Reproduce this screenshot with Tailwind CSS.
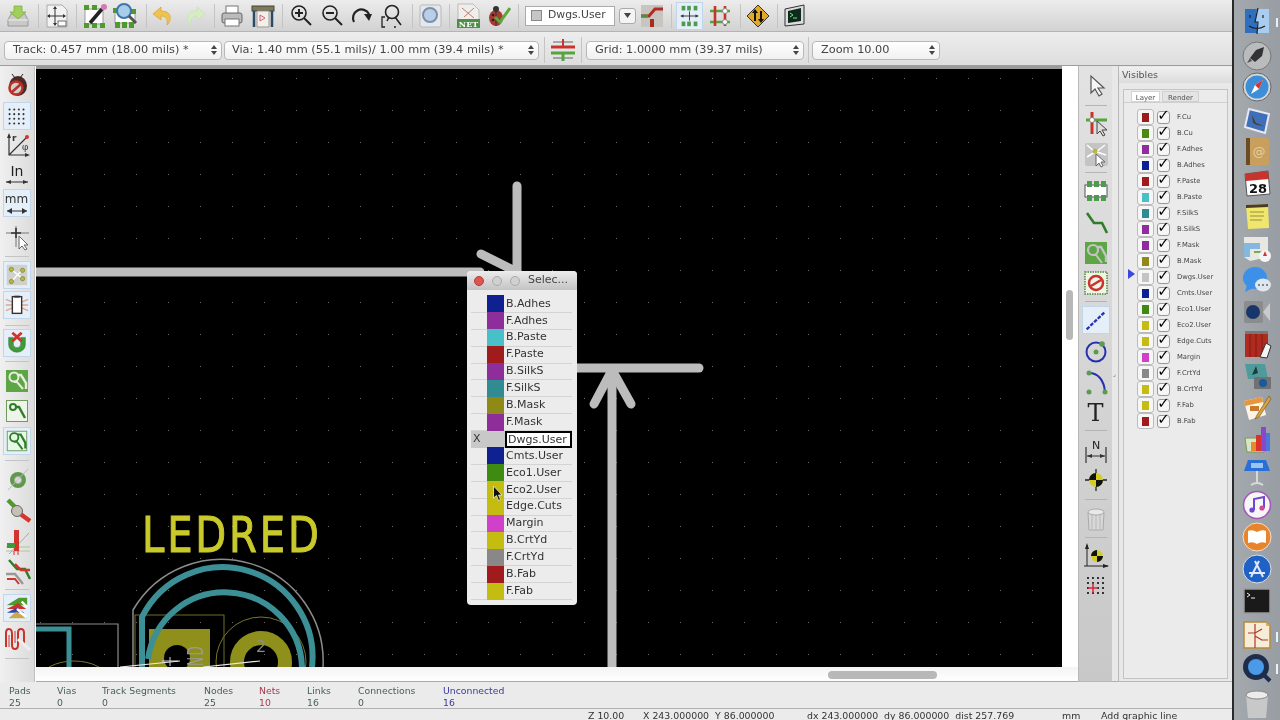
<!DOCTYPE html>
<html><head><meta charset="utf-8"><title>Pcbnew</title>
<script src="https://cdn.jsdelivr.net/npm/@tailwindcss/browser@4"></script>
</head>
<body class="overflow-hidden">
<div class="relative flex w-[1280px] h-[720px] overflow-hidden font-['DejaVu_Sans',sans-serif] text-[#333] bg-[#e8e8e8] blur-[0.4px]">
<div class="flex flex-col w-[1232px] h-[720px] shrink-0">

<!-- top toolbar -->
<div class="flex items-center h-[32px] pl-[5px] bg-gradient-to-b from-[#ececec] to-[#d2d2d2] border-b border-[#b4b4b4] shrink-0">
<svg class="w-[26px] h-[26px] shrink-0" viewBox="0 0 26 26"><path d="M3 17 L6 11 H20 L23 17 V23 H3Z" fill="#c9c9c9" stroke="#999"/><path d="M3 17H23" stroke="#eee"/><path d="M9 3H17V9H21L13 16L5 9H9Z" fill="#9fd05a" stroke="#7aa93c" stroke-width=".7"/></svg>
<i class="ml-[7px] w-px h-[24px] bg-[#c4c4c4] shrink-0"></i>
<svg class="ml-[5px] w-[26px] h-[26px] shrink-0" viewBox="0 0 26 26"><path d="M3 2H18L23 7V24H3Z" fill="#f2f2f2" stroke="#aaa"/><path d="M11 5V21M4 13H21" stroke="#333" stroke-width="1"/><path d="M11 3L9 6H13ZM11 23L9 20H13ZM3 13L6 11V15ZM22 13L19 11V15Z" fill="#333"/><rect x="14" y="18" width="8" height="5" fill="#fff" stroke="#333" stroke-width=".7"/></svg>
<i class="ml-[6px] w-px h-[24px] bg-[#c4c4c4] shrink-0"></i>
<svg class="ml-[5px] w-[26px] h-[26px] shrink-0" viewBox="0 0 26 26"><rect x="3" y="6" width="18" height="15" fill="#fff" stroke="#999"/><g fill="#4f9a2c"><rect x="2" y="2" width="5" height="5"/><rect x="2" y="20" width="5" height="5"/><rect x="10" y="20" width="5" height="5"/><rect x="18" y="20" width="5" height="5"/><rect x="10" y="2" width="5" height="5"/></g><path d="M8 20L20 6" stroke="#222" stroke-width="3.5"/><circle cx="22" cy="4" r="3" fill="#d878b0"/></svg>
<svg class="ml-[4px] w-[26px] h-[26px] shrink-0" viewBox="0 0 26 26"><rect x="3" y="8" width="20" height="12" fill="#fff" stroke="#999"/><g fill="#4f9a2c"><rect x="3" y="19" width="5" height="6"/><rect x="10" y="19" width="5" height="6"/><rect x="17" y="19" width="5" height="6"/><rect x="19" y="6" width="5" height="5"/><rect x="1" y="5" width="5" height="5"/></g><circle cx="12" cy="8" r="7" fill="#a8cdea" stroke="#3f76a8" stroke-width="2"/><path d="M17 13L24 20" stroke="#555" stroke-width="3"/></svg>
<i class="ml-[8px] w-px h-[24px] bg-[#c4c4c4] shrink-0"></i>
<svg class="ml-[3px] w-[26px] h-[26px] shrink-0" viewBox="0 0 26 26"><path d="M11 4L3 11L11 17V13C16 13 18 16 17 22C22 17 22 8 11 8Z" fill="#eec34e" stroke="#d7a22c" stroke-width=".7"/></svg>
<svg class="ml-[6px] w-[26px] h-[26px] shrink-0" viewBox="0 0 26 26"><path d="M15 4L23 11L15 17V13C10 13 8 16 9 22C4 17 4 8 15 8Z" fill="#d6edc4" stroke="#c5e2ad" stroke-width=".7"/></svg>
<i class="ml-[6px] w-px h-[24px] bg-[#c4c4c4] shrink-0"></i>
<svg class="ml-[4px] w-[26px] h-[26px] shrink-0" viewBox="0 0 26 26"><rect x="7" y="3" width="12" height="8" fill="#fff" stroke="#777"/><rect x="3" y="10" width="20" height="10" rx="2" fill="#bbb" stroke="#666"/><rect x="6" y="16" width="14" height="7" fill="#fff" stroke="#777"/></svg>
<svg class="ml-[5px] w-[26px] h-[26px] shrink-0" viewBox="0 0 26 26"><rect x="2" y="3" width="22" height="5" fill="#7d7a55" stroke="#444"/><path d="M4 8V24M22 8V24" stroke="#2b4a66" stroke-width="2.5"/><path d="M7 8H19V24H7Z" fill="#f3f0e8" stroke="#999"/><path d="M10 12L15 15L10 18Z" fill="none" stroke="#d06080"/></svg>
<i class="ml-[6px] w-px h-[24px] bg-[#c4c4c4] shrink-0"></i>
<svg class="ml-[5px] w-[26px] h-[26px] shrink-0" viewBox="0 0 26 26"><circle cx="11" cy="10" r="7" fill="none" stroke="#222" stroke-width="1.6"/><path d="M16 15L23 22" stroke="#222" stroke-width="2"/><path d="M7 10H15M11 6V14" stroke="#222" stroke-width="2"/></svg>
<svg class="ml-[5px] w-[26px] h-[26px] shrink-0" viewBox="0 0 26 26"><circle cx="11" cy="10" r="7" fill="none" stroke="#222" stroke-width="1.6"/><path d="M16 15L23 22" stroke="#222" stroke-width="2"/><path d="M7 10H15" stroke="#222" stroke-width="2"/></svg>
<svg class="ml-[4px] w-[26px] h-[26px] shrink-0" viewBox="0 0 26 26"><path d="M5 19A8 8 0 0 1 20 11" fill="none" stroke="#222" stroke-width="2.2"/><path d="M15 11H23L20 18Z" fill="#222"/></svg>
<svg class="ml-[3px] w-[26px] h-[26px] shrink-0" viewBox="0 0 26 26"><circle cx="14" cy="9" r="6.5" fill="none" stroke="#222" stroke-width="1.6"/><path d="M17 14L23 22M11 14L9 18" stroke="#222" stroke-width="1.6"/><path d="M7 14H4V24H7M18 24H16" fill="none" stroke="#222" stroke-width="1.3"/></svg>
<i class="ml-[8px] w-px h-[24px] bg-[#c4c4c4] shrink-0"></i>
<svg class="ml-[4px] w-[26px] h-[26px] shrink-0" viewBox="0 0 26 26"><rect x="3" y="2" width="21" height="22" rx="2" fill="#e4e8ee" stroke="#b8b8b8"/><circle cx="13" cy="12" r="7" fill="#b9cfe8" stroke="#7c8fa8" stroke-width="2"/></svg>
<i class="ml-[6px] w-px h-[24px] bg-[#c4c4c4] shrink-0"></i>
<svg class="ml-[5px] w-[26px] h-[26px] shrink-0" viewBox="0 0 26 26"><path d="M3 1H18L24 7V17H3Z" fill="#eee" stroke="#bbb"/><path d="M7 5L19 15M19 5L9 14" stroke="#c87a60" stroke-width="1"/><rect x="2" y="16" width="23" height="9" fill="#4f8f45"/><text x="13.5" y="24" text-anchor="middle" font-size="8" font-weight="700" fill="#fff" font-family="DejaVu Serif">NET</text></svg>
<svg class="ml-[4px] w-[26px] h-[26px] shrink-0" viewBox="0 0 26 26"><ellipse cx="11" cy="15" rx="7" ry="8" fill="#a83a30"/><path d="M11 7V23" stroke="#333"/><circle cx="8" cy="12" r="1.3" fill="#222"/><circle cx="8" cy="17" r="1.3" fill="#222"/><circle cx="14" cy="17" r="1.3" fill="#222"/><circle cx="11" cy="6" r="3" fill="#333"/><path d="M10 14L15 19L25 5" fill="none" stroke="#5ba83c" stroke-width="3"/></svg>
<i class="ml-[7px] w-px h-[24px] bg-[#c4c4c4] shrink-0"></i>
<div class="ml-[6px] w-[90px] h-[20px] flex items-center bg-white border border-[#aaa] shrink-0"><i class="ml-[5px] w-[11px] h-[11px] bg-[#c6c6c6] border border-[#888]"></i><span class="ml-[6px] text-[10.8px] text-[#444]">Dwgs.User</span></div>
<div class="ml-[4px] w-[17px] h-[16px] flex items-center justify-center bg-[#f4f4f4] border border-[#aaa] rounded-[3px] shrink-0"><svg class="w-[7px] h-[5px]" viewBox="0 0 7 5"><path d="M0 0H7L3.5 5Z" fill="#444"/></svg></div>
<svg class="ml-[3px] w-[26px] h-[26px] shrink-0" viewBox="0 0 26 26"><rect x="2" y="2" width="22" height="22" fill="#c8c4c0"/><path d="M2 13H10L16 6H24" fill="none" stroke="#b32c22" stroke-width="3"/><path d="M13 24V16" stroke="#a82a20" stroke-width="4"/><path d="M2 13H9" stroke="#4f8f45" stroke-width="3"/></svg>
<i class="ml-[6px] w-px h-[24px] bg-[#c4c4c4] shrink-0"></i>
<svg class="ml-[4px] w-[27px] h-[28px] shrink-0 bg-[#e4eff9] border border-[#c2d6ea]" viewBox="0 0 27 28"><g fill="#4f9a50"><rect x="5" y="3" width="4" height="5"/><rect x="11" y="3" width="4" height="5"/><rect x="18" y="3" width="4" height="5"/><rect x="5" y="20" width="4" height="5"/><rect x="11" y="20" width="4" height="5"/><rect x="18" y="20" width="4" height="5"/></g><path d="M4 14H23M13.5 9V19" stroke="#333"/><path d="M4 14L7 12V16ZM23 14L20 12V16Z" fill="#333"/></svg>
<svg class="ml-[4px] w-[26px] h-[26px] shrink-0" viewBox="0 0 26 26"><path d="M3 8H23M3 19H23" stroke="#55a53c" stroke-width="2.6"/><path d="M8 3V23M18 3V23" stroke="#c8342c" stroke-width="2.6"/><circle cx="18" cy="8" r="2.5" fill="#fff" stroke="#888"/><circle cx="18" cy="19" r="2.5" fill="#fff" stroke="#888"/></svg>
<i class="ml-[7px] w-px h-[24px] bg-[#c4c4c4] shrink-0"></i>
<svg class="ml-[4px] w-[26px] h-[26px] shrink-0" viewBox="0 0 26 26"><path d="M13 2L24 13L13 24L2 13Z" fill="#e0a92c" stroke="#333"/><path d="M10 18V8M16 8V18" stroke="#111" stroke-width="2"/><path d="M7 10L10 6L13 10ZM13 16L16 20L19 16Z" fill="#111"/></svg>
<i class="ml-[6px] w-px h-[24px] bg-[#c4c4c4] shrink-0"></i>
<svg class="ml-[4px] w-[26px] h-[26px] shrink-0" viewBox="0 0 26 26"><path d="M3 6L22 2V21L3 23Z" fill="#ddd" stroke="#333"/><path d="M6 8L19 5V18L6 20Z" fill="#0e2a1c"/><path d="M8 10L11 12L8 14M11 15H15" stroke="#7fe07f" fill="none"/></svg>
</div>

<!-- second toolbar -->
<div class="flex items-center h-[34px] pt-[3px] pl-[4px] bg-gradient-to-b from-[#ededed] to-[#dedede] border-b border-[#9e9e9e] text-[#444] shrink-0">
<div class="w-[218px] h-[19px] flex items-center justify-between pl-[8px] pr-[4px] bg-gradient-to-b from-white to-[#f0f0f0] border border-[#b8b8b8] rounded-[4px] text-[11.3px] shrink-0"><span>Track: 0.457 mm (18.00 mils) *</span><svg class="w-[6px] h-[10px]" viewBox="0 0 6 10"><path d="M0 4L3 0L6 4ZM0 6L3 10L6 6Z" fill="#444"/></svg></div>
<div class="ml-[2px] w-[315px] h-[19px] flex items-center justify-between pl-[7px] pr-[4px] bg-gradient-to-b from-white to-[#f0f0f0] border border-[#b8b8b8] rounded-[4px] text-[11.3px] shrink-0"><span>Via: 1.40 mm (55.1 mils)/ 1.00 mm (39.4 mils) *</span><svg class="w-[6px] h-[10px]" viewBox="0 0 6 10"><path d="M0 4L3 0L6 4ZM0 6L3 10L6 6Z" fill="#444"/></svg></div>
<i class="ml-[5px] w-px h-[26px] bg-[#c4c4c4] shrink-0"></i>
<svg class="ml-[5px] w-[26px] h-[26px] shrink-0" viewBox="0 0 26 26"><path d="M3 5H23M3 21H23" stroke="#444" stroke-width=".8"/><path d="M1 10H25" stroke="#c8342c" stroke-width="3"/><path d="M1 16H25" stroke="#55a53c" stroke-width="3"/><path d="M13 2V9" stroke="#c8342c" stroke-width="2"/><path d="M13 17V24" stroke="#55a53c" stroke-width="3"/></svg>
<i class="ml-[5px] w-px h-[26px] bg-[#c4c4c4] shrink-0"></i>
<div class="ml-[4px] w-[218px] h-[19px] flex items-center justify-between pl-[8px] pr-[4px] bg-gradient-to-b from-white to-[#f0f0f0] border border-[#b8b8b8] rounded-[4px] text-[11.3px] shrink-0"><span>Grid: 1.0000 mm (39.37 mils)</span><svg class="w-[6px] h-[10px]" viewBox="0 0 6 10"><path d="M0 4L3 0L6 4ZM0 6L3 10L6 6Z" fill="#444"/></svg></div>
<i class="ml-[4px] w-px h-[26px] bg-[#c4c4c4] shrink-0"></i>
<div class="ml-[3px] w-[128px] h-[19px] flex items-center justify-between pl-[8px] pr-[4px] bg-gradient-to-b from-white to-[#f0f0f0] border border-[#b8b8b8] rounded-[4px] text-[11.3px] shrink-0"><span>Zoom 10.00</span><svg class="w-[6px] h-[10px]" viewBox="0 0 6 10"><path d="M0 4L3 0L6 4ZM0 6L3 10L6 6Z" fill="#444"/></svg></div>
</div>

<!-- body -->
<div class="flex h-[616px] shrink-0">

<!-- left toolbar -->
<div class="flex flex-col items-center w-[35px] h-[616px] pt-[1px] pr-[1px] bg-gradient-to-r from-[#f0f0f0] to-[#dcdcdc] border-r border-[#c0c0c0] shrink-0">
<svg class="mt-[4px] w-[28px] h-[28px] shrink-0" viewBox="0 0 28 28"><ellipse cx="15" cy="15" rx="9" ry="10" fill="#4a2a28"/><path d="M9 3L12 7M20 3L17 7" stroke="#222"/><circle cx="13" cy="17" r="6.500" fill="#cfd0cc" stroke="#b83028" stroke-width="2.500"/><path d="M9 21L18 13" stroke="#b83028" stroke-width="2.500"/></svg>
<svg class="mt-[3px] w-[28px] h-[28px] shrink-0 bg-[#e4eff9] border border-[#c2d6ea]" viewBox="0 0 28 28"><g fill="#333"><circle cx="6" cy="7" r="1.1"/><circle cx="11" cy="7" r="1.1"/><circle cx="16" cy="7" r="1.1"/><circle cx="21" cy="7" r="1.1"/><circle cx="6" cy="12" r="1.1"/><circle cx="11" cy="12" r="1.1"/><circle cx="16" cy="12" r="1.1"/><circle cx="21" cy="12" r="1.1"/><circle cx="6" cy="17" r="1.1"/><circle cx="11" cy="17" r="1.1"/><circle cx="16" cy="17" r="1.1"/><circle cx="21" cy="17" r="1.1"/><circle cx="6" cy="22" r="1.1"/><circle cx="11" cy="22" r="1.1"/><circle cx="16" cy="22" r="1.1"/><circle cx="21" cy="22" r="1.1"/></g></svg>
<svg class="mt-[1px] w-[28px] h-[28px] shrink-0" viewBox="0 0 28 28"><path d="M6 4V24H25M6 24L24 6" fill="none" stroke="#333" stroke-width="1.2"/><path d="M6 2L4 7H8ZM27 24L22 22V26Z" fill="#333"/><circle cx="24" cy="6" r="2" fill="#d0342c"/><text x="9" y="10" font-size="9" font-weight="700" fill="#333" font-family="DejaVu Sans">r</text><text x="19" y="19" font-size="9" fill="#333" font-family="DejaVu Serif">φ</text></svg>
<svg class="w-[28px] h-[28px] shrink-0" viewBox="0 0 28 28"><text x="14" y="17" text-anchor="middle" font-size="14" fill="#222" font-family="DejaVu Sans">In</text><path d="M3 23H25" stroke="#333"/><path d="M3 23L8 21V25ZM25 23L20 21V25Z" fill="#333"/></svg>
<div class="mt-[2px] w-[28px] h-[28px] flex flex-col items-center bg-[#e4eff9] border border-[#c2d6ea] shrink-0"><span class="text-[12px] leading-[18px]">mm</span><svg class="w-[24px] h-[6px]" viewBox="0 0 24 6"><path d="M2 3H22" stroke="#333"/><path d="M2 3L7 0V6ZM22 3L17 0V6Z" fill="#333"/></svg></div>
<svg class="mt-[6px] w-[28px] h-[28px] shrink-0" viewBox="0 0 28 28"><path d="M3 10H26M13 3V24" stroke="#777" stroke-width="1"/><path d="M8 10H18M13 5V15" stroke="#333" stroke-width="1.6"/><path d="M16 13V26L19 23L22 27L24 26L21 22H25Z" fill="#fff" stroke="#666"/></svg>
<i class="mt-[5px] w-[24px] h-px bg-[#c4c4c4] shrink-0"></i>
<svg class="mt-[4px] w-[28px] h-[28px] shrink-0 bg-[#e4eff9] border border-[#c2d6ea]" viewBox="0 0 28 28"><rect x="3" y="3" width="22" height="22" fill="#d0d0cc"/><path d="M8 8L20 18M19 9L8 21" stroke="#fff" stroke-width="1.5"/><g fill="#b4ba3c" stroke="#6c6c20" stroke-width=".6"><circle cx="8" cy="8" r="2.3"/><circle cx="20" cy="9" r="2.3"/><circle cx="20" cy="18" r="2.3"/><circle cx="8" cy="21" r="2.3"/></g></svg>
<svg class="mt-[2px] w-[28px] h-[28px] shrink-0 bg-[#e4eff9] border border-[#c2d6ea]" viewBox="0 0 28 28"><path d="M2 8L9 11M2 14H9M2 20L9 17M26 8L19 11M26 14H19M26 20L19 17" stroke="#e2a58c" stroke-width="1.5"/><rect x="9" y="5" width="10" height="18" fill="#fff" stroke="#333" stroke-width="1.5"/><rect x="11" y="4" width="6" height="2" fill="#333"/></svg>
<i class="mt-[6px] w-[24px] h-px bg-[#c4c4c4] shrink-0"></i>
<svg class="mt-[3px] w-[28px] h-[28px] shrink-0 bg-[#e4eff9] border border-[#c2d6ea]" viewBox="0 0 28 28"><path d="M5 8V16A9 8 0 0 0 23 16V8H18V15A4 4 0 0 1 10 15V8Z" fill="#3f9a3a" stroke="#2b6f2a" stroke-width=".5"/><path d="M9 3L19 12M19 3L9 12" stroke="#d0342c" stroke-width="3"/></svg>
<i class="mt-[4px] w-[24px] h-px bg-[#c4c4c4] shrink-0"></i>
<svg class="mt-[5px] w-[28px] h-[28px] shrink-0" viewBox="0 0 28 28"><rect x="3" y="3" width="22" height="22" fill="#5da545"/><circle cx="11" cy="10" r="4.5" fill="none" stroke="#e5efdc" stroke-width="2"/><path d="M14 8H18L23 16V22" fill="none" stroke="#e5efdc" stroke-width="2.4"/><path d="M11 15H14L20 22" fill="none" stroke="#e5efdc" stroke-width="2"/></svg>
<svg class="mt-[2px] w-[28px] h-[28px] shrink-0" viewBox="0 0 28 28"><rect x="3.5" y="3.5" width="21" height="21" fill="#eef4ea" stroke="#6d9c5c"/><circle cx="10" cy="10" r="3" fill="none" stroke="#2e7d28" stroke-width="2"/><path d="M12 10H16L22 21" fill="none" stroke="#2e7d28" stroke-width="2.4"/></svg>
<svg class="mt-[2px] w-[28px] h-[28px] shrink-0 bg-[#e4eff9] border border-[#c2d6ea]" viewBox="0 0 28 28"><rect x="3.5" y="3.5" width="21" height="21" fill="#e8f8e8" stroke="#6d9c5c"/><circle cx="11" cy="10" r="4.5" fill="none" stroke="#2e7d28" stroke-width="2"/><path d="M14 7H18L23 16V22" fill="none" stroke="#2e7d28" stroke-width="2.4"/><path d="M11 15H14L20 23" fill="none" stroke="#2e7d28" stroke-width="2"/></svg>
<i class="mt-[5px] w-[24px] h-px bg-[#c4c4c4] shrink-0"></i>
<svg class="mt-[5px] w-[28px] h-[28px] shrink-0" viewBox="0 0 28 28"><circle cx="15" cy="14" r="8" fill="#5f9a4b"/><circle cx="15" cy="14" r="3.5" fill="#ddd" stroke="#aaa"/><path d="M5 24L25 3" stroke="#bbb"/></svg>
<svg class="mt-[3px] w-[28px] h-[28px] shrink-0" viewBox="0 0 28 28"><path d="M5 3L14 12" stroke="#4f9a2c" stroke-width="4.5"/><path d="M16 16L27 24" stroke="#d8342c" stroke-width="4.5"/><circle cx="14" cy="14" r="5.5" fill="#c4c0b4" stroke="#666"/></svg>
<svg class="mt-[2px] w-[28px] h-[28px] shrink-0" viewBox="0 0 28 28"><path d="M3 20H27M3 24H27" stroke="#a8c89a"/><path d="M6 27L26 6" stroke="#aaa"/><rect x="11" y="3" width="5" height="21" fill="#d0342c"/><rect x="4" y="16" width="8" height="5" fill="#3f9a3a"/><path d="M11 24V28M15 24V28" stroke="#d0342c"/></svg>
<svg class="mt-[2px] w-[28px] h-[28px] shrink-0" viewBox="0 0 28 28"><path d="M6 3L14 12H22L27 22" fill="none" stroke="#2e7d28" stroke-width="2.4"/><path d="M12 7L18 13H27" fill="none" stroke="#d0342c" stroke-width="2.4"/><path d="M3 17H12L20 27" fill="none" stroke="#999" stroke-width="2.4"/><path d="M4 22H12L16 27" fill="none" stroke="#d0342c" stroke-width="2"/></svg>
<i class="mt-[4px] w-[24px] h-px bg-[#c4c4c4] shrink-0"></i>
<svg class="mt-[4px] w-[28px] h-[28px] shrink-0 bg-[#e4eff9] border border-[#c2d6ea]" viewBox="0 0 28 28"><path d="M3 11L16 3H25V11Z" fill="#4f9a2c"/><path d="M3 15L15 9L24 15Z" fill="#c8342c"/><path d="M3 19L13 14L22 19Z" fill="#3044b0"/><path d="M5 25L13 18L25 25Z" fill="#c9a948"/><path d="M14 15L24 24M19 7L25 13" stroke="#fff" stroke-width="2.6"/></svg>
<svg class="mt-[3px] w-[28px] h-[28px] shrink-0" viewBox="0 0 28 28"><path d="M3 22V8Q3 4 6 4T9 9V20Q9 24 12 24T15 20V8Q15 4 18 4T21 8V20" fill="none" stroke="#c8342c" stroke-width="2"/><path d="M6 22V10M12 6V18" stroke="#c8342c"/><path d="M15 14L27 25" stroke="#eee" stroke-width="3.2"/></svg>
<i class="mt-[5px] w-[24px] h-px bg-[#c4c4c4] shrink-0"></i>
</div>

<!-- canvas column -->
<div class="flex flex-col w-[1043px] h-[616px] pl-[1px] bg-white shrink-0">
<div class="flex h-[601px]">
<svg class="block w-[1026px] h-[601px] bg-black border-t-[3px] border-t-[#9a9a9a] shrink-0" viewBox="36 69 1026 598">
<defs><pattern id="dots" x="8" y="14" width="32" height="32" patternUnits="userSpaceOnUse"><rect x="0" y="0" width="1" height="1" fill="#6a6a6a"/></pattern></defs>
<rect x="36" y="69" width="1026" height="598" fill="url(#dots)"/>
<g fill="none" stroke="#bcbcbc" stroke-width="9" stroke-linecap="round">
<path d="M30 272H480"/><path d="M517 186V275"/><path d="M481 254L517 272"/>
<path d="M570 368H699"/><path d="M612 370V680"/><path d="M612 370L594 404M612 370L631 404"/>
</g>
<text transform="translate(142 552) scale(.82 1)" font-size="49" letter-spacing="3.4" fill="#c9c92c" stroke="#c9c92c" stroke-width="1" font-family="DejaVu Sans">LEDRED</text>
<g fill="none">
<path d="M133 667V610A102 102 0 0 1 323 667" stroke="#8c8c8c" stroke-width="1.500"/>
<rect x="135" y="615" width="89" height="70" stroke="#6f6f2a"/>
<rect x="149" y="629" width="61" height="50" fill="#8f8f1c"/>
<circle cx="177" cy="658" r="13" fill="#000"/>
<circle cx="261" cy="662" r="24" stroke="#8f8f1c" stroke-width="14"/>
<circle cx="261" cy="662" r="45" stroke="#77772a"/>
<path d="M142 680V617A90 90 0 0 1 312 667" stroke="#3d8f96" stroke-width="6"/>
<path d="M148 659A77.400 77.400 0 0 1 302 667" stroke="#3d8f96" stroke-width="6"/>
<path d="M36 629H69V667" stroke="#3d8f96" stroke-width="5"/>
<path d="M36 624H118V667" stroke="#8c8c8c" stroke-width="1.200"/>
<path d="M40 680A34 19 0 0 1 108 680" stroke="#77772a"/>
<path d="M120 667L180 661M203 667L260 661" stroke="#e8e8e8" stroke-width="1.200"/>
<path d="M170 657V666M162 661H178" stroke="#d8d8d8"/>
</g>
<text x="261" y="652" text-anchor="middle" font-size="16" fill="#8c8c8c" font-family="DejaVu Sans">2</text>
<text transform="translate(203 666) rotate(-90) scale(.8 1.4)" font-size="15" letter-spacing="2" fill="#9c9c9c" font-family="DejaVu Sans">ND</text>
</svg>
<div class="relative w-[15px] h-[601px] bg-white shrink-0"><i class="absolute left-[4px] top-[224px] w-[7px] h-[50px] rounded-[4px] bg-[#b8b8b8]"></i></div>
</div>
<div class="relative h-[15px] bg-gradient-to-b from-[#f4f4f4] to-white border-b border-[#a8a8a8]"><i class="absolute left-[792px] top-[4px] w-[109px] h-[8px] rounded-[4px] bg-[#b8b8b8]"></i></div>
</div>

<!-- right toolbar -->
<div class="flex flex-col items-center w-[34px] h-[616px] bg-gradient-to-b from-[#e2e2e2] to-[#c8c8c8] border-l border-[#b8b8b8] border-b shrink-0">
<svg class="mt-[6px] w-[28px] h-[28px] shrink-0" viewBox="0 0 28 28"><path d="M9 4V21L13 17L17 24L20 22L16 16H22Z" fill="#f6f6f6" stroke="#555" stroke-width="1.2"/></svg>
<i class="mt-[5px] w-[22px] h-px bg-[#b4b4b4] shrink-0"></i>
<svg class="mt-[3px] w-[28px] h-[28px] shrink-0" viewBox="0 0 28 28"><path d="M4 11H25" stroke="#55a53c" stroke-width="3"/><path d="M10 3V25" stroke="#c8342c" stroke-width="3"/><circle cx="10" cy="11" r="2.5" fill="#fff" stroke="#888"/><path d="M15 12V25L18 22L21 27L23 26L20 21H25Z" fill="#ddd" stroke="#444"/></svg>
<svg class="mt-[3px] w-[28px] h-[28px] shrink-0" viewBox="0 0 28 28"><rect x="3" y="3" width="23" height="23" rx="2" fill="#c4c4c4"/><path d="M5 5L13 12M23 5L14 12M5 17L13 12M24 15L15 12" stroke="#fff" stroke-width="1.5"/><circle cx="13" cy="11" r="2.5" fill="#b4ba3c"/><path d="M14 14V26L17 23L19 27L21 26L19 22H23Z" fill="#fff" stroke="#666"/></svg>
<i class="mt-[4px] w-[22px] h-px bg-[#b4b4b4] shrink-0"></i>
<svg class="mt-[4px] w-[28px] h-[28px] shrink-0" viewBox="0 0 28 28"><rect x="3" y="8" width="22" height="12" fill="#fff" stroke="#555"/><g fill="#4f9a50"><rect x="5" y="4" width="5" height="6"/><rect x="12" y="4" width="5" height="6"/><rect x="19" y="4" width="5" height="6"/><rect x="5" y="18" width="5" height="6"/><rect x="12" y="18" width="5" height="6"/><rect x="19" y="18" width="5" height="6"/></g></svg>
<svg class="mt-[4px] w-[28px] h-[28px] shrink-0" viewBox="0 0 28 28"><path d="M5 4L12 14H20L25 24" fill="none" stroke="#2e7d28" stroke-width="2.6"/></svg>
<svg class="mt-[2px] w-[28px] h-[28px] shrink-0" viewBox="0 0 28 28"><rect x="3" y="3" width="22" height="22" fill="#5da545"/><circle cx="11" cy="11" r="5" fill="none" stroke="#c4c4c4" stroke-width="2.2"/><path d="M15 8H19L24 17V23" fill="none" stroke="#c4c4c4" stroke-width="2.4"/><path d="M11 16H14L20 24" fill="none" stroke="#c4c4c4" stroke-width="2"/></svg>
<svg class="mt-[2px] w-[28px] h-[28px] shrink-0" viewBox="0 0 28 28"><rect x="3" y="3" width="22" height="22" fill="#eef4e6" stroke="#4d8a3c" stroke-width="1.5" stroke-dasharray="1.5 1"/><circle cx="14" cy="14" r="7" fill="none" stroke="#c8342c" stroke-width="2.5"/><path d="M9 17L19 11" stroke="#c8342c" stroke-width="2.5"/></svg>
<i class="mt-[4px] w-[22px] h-px bg-[#b4b4b4] shrink-0"></i>
<svg class="mt-[4px] w-[28px] h-[28px] shrink-0 bg-[#e4eff9] border border-[#c2d6ea]" viewBox="0 0 28 28"><path d="M4 24L24 5" stroke="#2830b0" stroke-width="2.5" stroke-dasharray="4 1.5"/></svg>
<svg class="mt-[3px] w-[28px] h-[28px] shrink-0" viewBox="0 0 28 28"><circle cx="14" cy="15" r="9.5" fill="none" stroke="#2830b0" stroke-width="2"/><circle cx="14" cy="15" r="2.5" fill="#5d9a50"/><circle cx="20" cy="7" r="2.8" fill="#5d9a50"/></svg>
<svg class="mt-[3px] w-[28px] h-[28px] shrink-0" viewBox="0 0 28 28"><path d="M7 5C16 5 22 12 23 24" fill="none" stroke="#2830b0" stroke-width="2"/><circle cx="7" cy="5" r="2.5" fill="#5d9a50"/><circle cx="7" cy="24" r="2.5" fill="#5d9a50"/><circle cx="23" cy="24" r="2.5" fill="#5d9a50"/></svg>
<div class="mt-[1px] pt-[3px] w-[28px] h-[28px] flex items-center justify-center text-[24px] leading-none font-['DejaVu_Serif',serif] text-[#222] shrink-0">T</div>
<i class="mt-[5px] w-[22px] h-px bg-[#b4b4b4] shrink-0"></i>
<svg class="mt-[6px] w-[28px] h-[28px] shrink-0" viewBox="0 0 28 28"><text x="14" y="12" text-anchor="middle" font-size="11" fill="#222" font-family="DejaVu Sans">N</text><path d="M4 10V26M24 10V26M5 19H23" stroke="#333" stroke-width="1.2"/><path d="M5 19L10 17V21ZM23 19L18 17V21Z" fill="#333"/></svg>
<svg class="mt-[1px] w-[28px] h-[28px] shrink-0" viewBox="0 0 28 28"><path d="M14 3V25M3 14H25" stroke="#222" stroke-width="1.3"/><circle cx="14" cy="14" r="7" fill="#d4ce24"/><path d="M14 7A7 7 0 0 0 7 14H14ZM14 21A7 7 0 0 0 21 14H14Z" fill="#111"/></svg>
<i class="mt-[5px] w-[22px] h-px bg-[#b4b4b4] shrink-0"></i>
<svg class="mt-[5px] w-[28px] h-[28px] shrink-0" viewBox="0 0 28 28"><path d="M6 8H22L21 25H7Z" fill="#d8d8d8" stroke="#aaa"/><ellipse cx="14" cy="7" rx="8" ry="3" fill="#e8e8e8" stroke="#aaa"/><path d="M10 10V24M14 10V24M18 10V24" stroke="#b8b8b8"/></svg>
<i class="mt-[4px] w-[22px] h-px bg-[#b4b4b4] shrink-0"></i>
<svg class="mt-[4px] w-[28px] h-[28px] shrink-0" viewBox="0 0 28 28"><path d="M5 3V24H26M2 24H5" stroke="#222" fill="none"/><path d="M5 1L3 7H7ZM27 24L21 22V26Z" fill="#222"/><circle cx="15" cy="14" r="6" fill="#d4ce24"/><path d="M15 8A6 6 0 0 0 9 14H15ZM15 20A6 6 0 0 0 21 14H15Z" fill="#111"/></svg>
<svg class="mt-[2px] w-[28px] h-[28px] shrink-0" viewBox="0 0 28 28"><g fill="#333"><rect x="5" y="5" width="2" height="2"/><rect x="10" y="5" width="2" height="2"/><rect x="15" y="5" width="2" height="2"/><rect x="20" y="5" width="2" height="2"/><rect x="5" y="10" width="2" height="2"/><rect x="10" y="10" width="2" height="2"/><rect x="15" y="10" width="2" height="2"/><rect x="20" y="10" width="2" height="2"/><rect x="5" y="15" width="2" height="2"/><rect x="15" y="15" width="2" height="2"/><rect x="20" y="15" width="2" height="2"/><rect x="5" y="20" width="2" height="2"/><rect x="10" y="20" width="2" height="2"/><rect x="15" y="20" width="2" height="2"/><rect x="20" y="20" width="2" height="2"/></g><path d="M6 16H16M11 11V21" stroke="#d8243c" stroke-width="1.5"/></svg>
</div>

<!-- sash -->
<div class="flex items-center w-[6px] h-[616px] pl-px bg-[#e8e8e8] border-b border-[#b0b0b0] shrink-0"><span class="text-[6px] text-[#666] leading-none">⌟</span></div>

<!-- visibles -->
<div class="flex flex-col w-[114px] h-[616px] bg-[#e8e8e8] border-l border-b border-[#b8b8b8] shrink-0">
<div class="h-[16px] pl-[3px] text-[9.5px] leading-[16px] text-[#555] bg-gradient-to-b from-[#f0f0f0] to-[#dcdcdc] mt-[1px]">Visibles</div>
<div class="relative ml-[4px] mt-[6px] w-[105px] h-[590px] bg-[#ebebeb] border border-[#c4c4c4]">
<div class="flex h-[13px] pl-[7px] pt-[1px] border-b border-[#cfcfcf] text-[7px] leading-[12px] text-[#555]"><span class="w-[29px] text-center bg-white border border-[#d4d4d4]">Layer</span><span class="ml-[2px] w-[37px] text-center bg-[#e4e4e4] border border-[#d0d0d0]">Render</span></div>

<div class="absolute left-[1px] top-[179px] w-0 h-0 border-y-[5px] border-y-transparent border-l-[7px] border-l-[#3c46e0] ml-[3px]"></div>
<div class="flex flex-col pl-[13px] pt-[6px] text-[6.8px] text-[#444]">
<div class="flex items-center h-[16px]"><span class="flex items-center justify-center w-[17px] h-[16px] bg-[#f6f6f6] border border-[#bbb] rounded-[3px]"><i class="w-[7px] h-[9px] bg-[#9c1c1c]"></i></span><span class="ml-[3px] w-[13px] h-[13px] flex items-center justify-center pb-[3px] bg-[#f6f6f6] border border-[#999] rounded-[3px] text-[15px] font-bold leading-none text-black">✓</span><span class="ml-[7px]">F.Cu</span></div>
<div class="flex items-center h-[16px]"><span class="flex items-center justify-center w-[17px] h-[16px] bg-[#f6f6f6] border border-[#bbb] rounded-[3px]"><i class="w-[7px] h-[9px] bg-[#4a8a10]"></i></span><span class="ml-[3px] w-[13px] h-[13px] flex items-center justify-center pb-[3px] bg-[#f6f6f6] border border-[#999] rounded-[3px] text-[15px] font-bold leading-none text-black">✓</span><span class="ml-[7px]">B.Cu</span></div>
<div class="flex items-center h-[16px]"><span class="flex items-center justify-center w-[17px] h-[16px] bg-[#f6f6f6] border border-[#bbb] rounded-[3px]"><i class="w-[7px] h-[9px] bg-[#8e2e9a]"></i></span><span class="ml-[3px] w-[13px] h-[13px] flex items-center justify-center pb-[3px] bg-[#f6f6f6] border border-[#999] rounded-[3px] text-[15px] font-bold leading-none text-black">✓</span><span class="ml-[7px]">F.Adhes</span></div>
<div class="flex items-center h-[16px]"><span class="flex items-center justify-center w-[17px] h-[16px] bg-[#f6f6f6] border border-[#bbb] rounded-[3px]"><i class="w-[7px] h-[9px] bg-[#0f2090]"></i></span><span class="ml-[3px] w-[13px] h-[13px] flex items-center justify-center pb-[3px] bg-[#f6f6f6] border border-[#999] rounded-[3px] text-[15px] font-bold leading-none text-black">✓</span><span class="ml-[7px]">B.Adhes</span></div>
<div class="flex items-center h-[16px]"><span class="flex items-center justify-center w-[17px] h-[16px] bg-[#f6f6f6] border border-[#bbb] rounded-[3px]"><i class="w-[7px] h-[9px] bg-[#a01c1c]"></i></span><span class="ml-[3px] w-[13px] h-[13px] flex items-center justify-center pb-[3px] bg-[#f6f6f6] border border-[#999] rounded-[3px] text-[15px] font-bold leading-none text-black">✓</span><span class="ml-[7px]">F.Paste</span></div>
<div class="flex items-center h-[16px]"><span class="flex items-center justify-center w-[17px] h-[16px] bg-[#f6f6f6] border border-[#bbb] rounded-[3px]"><i class="w-[7px] h-[9px] bg-[#48c0c8]"></i></span><span class="ml-[3px] w-[13px] h-[13px] flex items-center justify-center pb-[3px] bg-[#f6f6f6] border border-[#999] rounded-[3px] text-[15px] font-bold leading-none text-black">✓</span><span class="ml-[7px]">B.Paste</span></div>
<div class="flex items-center h-[16px]"><span class="flex items-center justify-center w-[17px] h-[16px] bg-[#f6f6f6] border border-[#bbb] rounded-[3px]"><i class="w-[7px] h-[9px] bg-[#308c90]"></i></span><span class="ml-[3px] w-[13px] h-[13px] flex items-center justify-center pb-[3px] bg-[#f6f6f6] border border-[#999] rounded-[3px] text-[15px] font-bold leading-none text-black">✓</span><span class="ml-[7px]">F.SilkS</span></div>
<div class="flex items-center h-[16px]"><span class="flex items-center justify-center w-[17px] h-[16px] bg-[#f6f6f6] border border-[#bbb] rounded-[3px]"><i class="w-[7px] h-[9px] bg-[#8e2e9a]"></i></span><span class="ml-[3px] w-[13px] h-[13px] flex items-center justify-center pb-[3px] bg-[#f6f6f6] border border-[#999] rounded-[3px] text-[15px] font-bold leading-none text-black">✓</span><span class="ml-[7px]">B.SilkS</span></div>
<div class="flex items-center h-[16px]"><span class="flex items-center justify-center w-[17px] h-[16px] bg-[#f6f6f6] border border-[#bbb] rounded-[3px]"><i class="w-[7px] h-[9px] bg-[#8e2e9a]"></i></span><span class="ml-[3px] w-[13px] h-[13px] flex items-center justify-center pb-[3px] bg-[#f6f6f6] border border-[#999] rounded-[3px] text-[15px] font-bold leading-none text-black">✓</span><span class="ml-[7px]">F.Mask</span></div>
<div class="flex items-center h-[16px]"><span class="flex items-center justify-center w-[17px] h-[16px] bg-[#f6f6f6] border border-[#bbb] rounded-[3px]"><i class="w-[7px] h-[9px] bg-[#8f8a18]"></i></span><span class="ml-[3px] w-[13px] h-[13px] flex items-center justify-center pb-[3px] bg-[#f6f6f6] border border-[#999] rounded-[3px] text-[15px] font-bold leading-none text-black">✓</span><span class="ml-[7px]">B.Mask</span></div>
<div class="flex items-center h-[16px]"><span class="flex items-center justify-center w-[17px] h-[16px] bg-[#f6f6f6] border border-[#bbb] rounded-[3px]"><i class="w-[7px] h-[9px] bg-[#c4c4c4]"></i></span><span class="ml-[3px] w-[13px] h-[13px] flex items-center justify-center pb-[3px] bg-[#f6f6f6] border border-[#999] rounded-[3px] text-[15px] font-bold leading-none text-black">✓</span><span class="ml-[7px]">Dwgs.User</span></div>
<div class="flex items-center h-[16px]"><span class="flex items-center justify-center w-[17px] h-[16px] bg-[#f6f6f6] border border-[#bbb] rounded-[3px]"><i class="w-[7px] h-[9px] bg-[#0f2090]"></i></span><span class="ml-[3px] w-[13px] h-[13px] flex items-center justify-center pb-[3px] bg-[#f6f6f6] border border-[#999] rounded-[3px] text-[15px] font-bold leading-none text-black">✓</span><span class="ml-[7px]">Cmts.User</span></div>
<div class="flex items-center h-[16px]"><span class="flex items-center justify-center w-[17px] h-[16px] bg-[#f6f6f6] border border-[#bbb] rounded-[3px]"><i class="w-[7px] h-[9px] bg-[#3f8a10]"></i></span><span class="ml-[3px] w-[13px] h-[13px] flex items-center justify-center pb-[3px] bg-[#f6f6f6] border border-[#999] rounded-[3px] text-[15px] font-bold leading-none text-black">✓</span><span class="ml-[7px]">Eco1.User</span></div>
<div class="flex items-center h-[16px]"><span class="flex items-center justify-center w-[17px] h-[16px] bg-[#f6f6f6] border border-[#bbb] rounded-[3px]"><i class="w-[7px] h-[9px] bg-[#c4bc10]"></i></span><span class="ml-[3px] w-[13px] h-[13px] flex items-center justify-center pb-[3px] bg-[#f6f6f6] border border-[#999] rounded-[3px] text-[15px] font-bold leading-none text-black">✓</span><span class="ml-[7px]">Eco2.User</span></div>
<div class="flex items-center h-[16px]"><span class="flex items-center justify-center w-[17px] h-[16px] bg-[#f6f6f6] border border-[#bbb] rounded-[3px]"><i class="w-[7px] h-[9px] bg-[#c4bc10]"></i></span><span class="ml-[3px] w-[13px] h-[13px] flex items-center justify-center pb-[3px] bg-[#f6f6f6] border border-[#999] rounded-[3px] text-[15px] font-bold leading-none text-black">✓</span><span class="ml-[7px]">Edge.Cuts</span></div>
<div class="flex items-center h-[16px]"><span class="flex items-center justify-center w-[17px] h-[16px] bg-[#f6f6f6] border border-[#bbb] rounded-[3px]"><i class="w-[7px] h-[9px] bg-[#d040c8]"></i></span><span class="ml-[3px] w-[13px] h-[13px] flex items-center justify-center pb-[3px] bg-[#f6f6f6] border border-[#999] rounded-[3px] text-[15px] font-bold leading-none text-black">✓</span><span class="ml-[7px]">Margin</span></div>
<div class="flex items-center h-[16px]"><span class="flex items-center justify-center w-[17px] h-[16px] bg-[#f6f6f6] border border-[#bbb] rounded-[3px]"><i class="w-[7px] h-[9px] bg-[#888888]"></i></span><span class="ml-[3px] w-[13px] h-[13px] flex items-center justify-center pb-[3px] bg-[#f6f6f6] border border-[#999] rounded-[3px] text-[15px] font-bold leading-none text-black">✓</span><span class="ml-[7px]">F.CrtYd</span></div>
<div class="flex items-center h-[16px]"><span class="flex items-center justify-center w-[17px] h-[16px] bg-[#f6f6f6] border border-[#bbb] rounded-[3px]"><i class="w-[7px] h-[9px] bg-[#c4bc10]"></i></span><span class="ml-[3px] w-[13px] h-[13px] flex items-center justify-center pb-[3px] bg-[#f6f6f6] border border-[#999] rounded-[3px] text-[15px] font-bold leading-none text-black">✓</span><span class="ml-[7px]">B.CrtYd</span></div>
<div class="flex items-center h-[16px]"><span class="flex items-center justify-center w-[17px] h-[16px] bg-[#f6f6f6] border border-[#bbb] rounded-[3px]"><i class="w-[7px] h-[9px] bg-[#c4bc10]"></i></span><span class="ml-[3px] w-[13px] h-[13px] flex items-center justify-center pb-[3px] bg-[#f6f6f6] border border-[#999] rounded-[3px] text-[15px] font-bold leading-none text-black">✓</span><span class="ml-[7px]">F.Fab</span></div>
<div class="flex items-center h-[16px]"><span class="flex items-center justify-center w-[17px] h-[16px] bg-[#f6f6f6] border border-[#bbb] rounded-[3px]"><i class="w-[7px] h-[9px] bg-[#a01c1c]"></i></span><span class="ml-[3px] w-[13px] h-[13px] flex items-center justify-center pb-[3px] bg-[#f6f6f6] border border-[#999] rounded-[3px] text-[15px] font-bold leading-none text-black">✓</span><span class="ml-[7px]">B.Fab</span></div>
</div>
</div>
</div>
</div>

<!-- message panel -->
<div class="flex h-[27px] pl-[9px] pt-[3px] bg-[#ebebeb] border-b border-[#b0b0b0] text-[9.3px] leading-[12px] text-[#47615a] shrink-0">
<div class="w-[48px]">Pads<br>25</div>
<div class="w-[45px]">Vias<br>0</div>
<div class="w-[102px]">Track Segments<br>0</div>
<div class="w-[55px]">Nodes<br>25</div>
<div class="w-[48px] text-[#a83a50]">Nets<br>10</div>
<div class="w-[51px]">Links<br>16</div>
<div class="w-[85px]">Connections<br>0</div>
<div class="text-[#3a3a9a]">Unconnected<br>16</div>
</div>

<!-- status bar -->
<div class="flex h-[11px] pl-[588px] bg-[#ebebeb] text-[9.4px] leading-[14px] text-[#333] whitespace-nowrap shrink-0">
<span class="w-[55px]">Z 10.00</span><span class="w-[164px]">X 243.000000&nbsp; Y 86.000000</span><span class="w-[255px]">dx 243.000000&nbsp; dy 86.000000&nbsp; dist 257.769</span><span class="w-[39px]">mm</span><span>Add graphic line</span>
</div>
</div>

<!-- dock -->
<div class="flex flex-col items-center w-[48px] h-[720px] bg-gradient-to-r from-[#a4a9ae] to-[#989da3] border-l-2 border-[#2a2a2a] shrink-0">
<svg class="mt-[6px] w-[30px] h-[30px] shrink-0" viewBox="0 0 30 30"><rect x="3" y="3" width="24" height="24" fill="#a8cdf0"/><path d="M3 3H15L13 16H15V27H3Z" fill="#2f6fc0"/><path d="M16 2L13 16H16L15 28M8 9V12M21 9V12M7 20Q15 25 23 20" fill="none" stroke="#222" stroke-width="1.2"/></svg>
<svg class="mt-[5px] w-[30px] h-[30px] shrink-0" viewBox="0 0 30 30"><circle cx="15" cy="15" r="14" fill="#b9bbbd" stroke="#777"/><path d="M22 6L14 9L8 17L13 21L20 15Z" fill="#333"/><path d="M8 17L5 22L10 20Z" fill="#555"/></svg>
<svg class="mt-[1px] w-[30px] h-[30px] shrink-0" viewBox="0 0 30 30"><circle cx="15" cy="15" r="14" fill="#d8d8d8" stroke="#666"/><circle cx="15" cy="15" r="11.5" fill="#3d8ed8"/><path d="M21 8L13 13L9 22L17 17Z" fill="#fff"/><path d="M21 8L13 13L17 17Z" fill="#d8342c"/></svg>
<svg class="mt-[3px] w-[30px] h-[30px] shrink-0" viewBox="0 0 30 30"><path d="M7 4L27 9L23 28L3 22Z" fill="#3f6fb8" stroke="#e8e8f4" stroke-width="2"/><path d="M10 10L14 18L22 21L15 20L11 18Z" fill="#4b4030"/></svg>
<svg class="mt-[1px] w-[30px] h-[30px] shrink-0" viewBox="0 0 30 30"><rect x="4" y="2" width="23" height="27" rx="2" fill="#c99f5e"/><rect x="4" y="2" width="4" height="27" fill="#6b4a28"/><text x="17" y="20" text-anchor="middle" font-size="13" fill="#e7cfa0" font-family="DejaVu Sans">@</text></svg>
<svg class="mt-[2px] w-[30px] h-[30px] shrink-0" viewBox="0 0 30 30"><path d="M3 6L26 3L28 26L5 28Z" fill="#fff" stroke="#555"/><path d="M3 6L26 3L26.8 11L4 13Z" fill="#c8342c"/><text x="16" y="25" text-anchor="middle" font-size="13" font-weight="700" fill="#111" font-family="DejaVu Sans">28</text></svg>
<svg class="mt-[3px] w-[30px] h-[30px] shrink-0" viewBox="0 0 30 30"><path d="M4 4L26 3L27 27L6 28Z" fill="#f0e66e"/><path d="M4 4L26 3V6L4 7Z" fill="#4a3a28"/><path d="M8 11H22M8 15H22M8 19H20" stroke="#998f3c"/></svg>
<svg class="mt-[2px] w-[30px] h-[30px] shrink-0" viewBox="0 0 30 30"><path d="M2 4H26V24L8 28L2 24Z" fill="#e8e8e0"/><path d="M2 10H18V16H8V24H2Z" fill="#84b8e0"/><path d="M12 18H22V20H12Z" fill="#7aa85a"/><circle cx="23" cy="23" r="6" fill="#f4f4f4"/><path d="M23 18L25 23H21Z" fill="#d8342c"/></svg>
<svg class="mt-[2px] w-[30px] h-[30px] shrink-0" viewBox="0 0 30 30"><ellipse cx="13" cy="13" rx="12" ry="11" fill="#3d90e8"/><path d="M5 20L3 27L11 23Z" fill="#3d90e8"/><ellipse cx="21" cy="20" rx="8" ry="6.5" fill="#dfe6ee"/><circle cx="17" cy="20" r="1" fill="#666"/><circle cx="21" cy="20" r="1" fill="#666"/><circle cx="25" cy="20" r="1" fill="#666"/></svg>
<svg class="mt-[2px] w-[30px] h-[30px] shrink-0" viewBox="0 0 30 30"><rect x="2" y="4" width="19" height="22" rx="2" fill="#8a8c8e"/><circle cx="11" cy="15" r="7" fill="#17376a"/><path d="M28 6V24L21 15Z" fill="#c9cacc"/></svg>
<svg class="mt-[2px] w-[30px] h-[30px] shrink-0" viewBox="0 0 30 30"><rect x="3" y="2" width="23" height="26" fill="#b02a20"/><path d="M8 2V28M14 2V28M20 2V28" stroke="#7c1a14"/><rect x="3" y="2" width="23" height="3" fill="#777"/><path d="M18 28L24 14L29 17L25 29Z" fill="#f4f4f4" stroke="#333"/></svg>
<svg class="mt-[2px] w-[30px] h-[30px] shrink-0" viewBox="0 0 30 30"><path d="M3 3H23L26 18H6Z" fill="#4f9a9a"/><path d="M10 14L14 5L16 12Z" fill="#1d3c34"/><rect x="12" y="16" width="17" height="12" rx="1" fill="#6f7175"/><circle cx="21" cy="22" r="4" fill="#1b5a9a"/></svg>
<svg class="mt-[2px] w-[30px] h-[30px] shrink-0" viewBox="0 0 30 30"><path d="M2 8L20 4L24 22L7 27Z" fill="#fbf4e6"/><path d="M2 8L20 4L21 9L3 13Z" fill="#e8963c"/><rect x="8" y="13" width="9" height="5" fill="#c87a30"/><path d="M27 3L15 22L13 26L17 24L29 6Z" fill="#d9a43c" stroke="#7c5a28" stroke-width=".7"/></svg>
<svg class="mt-[2px] w-[30px] h-[30px] shrink-0" viewBox="0 0 30 30"><path d="M3 13H22V27H5Z" fill="#d8e6c8" stroke="#6fa050"/><rect x="9" y="17" width="5" height="9" fill="#e88a2c"/><rect x="14" y="10" width="5" height="16" fill="#d8342c"/><rect x="19" y="2" width="5" height="24" fill="#8a48c8"/><rect x="24" y="8" width="4" height="18" fill="#4878e0"/></svg>
<svg class="mt-[2px] w-[30px] h-[30px] shrink-0" viewBox="0 0 30 30"><path d="M6 3H24L28 14H2Z" fill="#2870d8"/><rect x="9" y="6" width="12" height="5" fill="#9cc4ec"/><path d="M15 14V26M9 28Q15 24 21 28" stroke="#d8d8d8" stroke-width="2" fill="none"/></svg>
<svg class="mt-[3px] w-[30px] h-[30px] shrink-0" viewBox="0 0 30 30"><circle cx="15" cy="15" r="13.5" fill="#f6f6f6" stroke="#a458b8" stroke-width="1.5"/><path d="M12 20V9L22 7V18" fill="none" stroke="#7048d0" stroke-width="2"/><circle cx="10" cy="20" r="2.6" fill="#7048d0"/><circle cx="20" cy="18" r="2.6" fill="#d04898"/></svg>
<svg class="mt-[2px] w-[30px] h-[30px] shrink-0" viewBox="0 0 30 30"><circle cx="15" cy="15" r="14" fill="#e8852c" stroke="#f0e0d0"/><path d="M15 10Q10 7 6 9V21Q11 19 15 22Q19 19 24 21V9Q20 7 15 10Z" fill="#fff"/></svg>
<svg class="mt-[2px] w-[30px] h-[30px] shrink-0" viewBox="0 0 30 30"><circle cx="15" cy="15" r="14" fill="#1e62c8" stroke="#e0e0e0"/><path d="M9 23L17 7M21 23L13 7M7 19H23" stroke="#dfe9f8" stroke-width="2"/></svg>
<svg class="mt-[2px] w-[30px] h-[30px] shrink-0" viewBox="0 0 30 30"><rect x="2" y="3" width="26" height="24" fill="#1a1a1a" stroke="#999" stroke-width="1.5"/><path d="M5 7L8 9L5 11M9 12H13" stroke="#eee" fill="none"/></svg>
<svg class="mt-[4px] w-[30px] h-[30px] shrink-0" viewBox="0 0 30 30"><path d="M2 2H24L28 6V28H2Z" fill="#f6ecd8" stroke="#b88a3c" stroke-width="1.5"/><path d="M13 4V28M6 13H13M13 13L20 9M13 16L20 20M19 20H26" stroke="#b03a28" stroke-width="1.2"/><path d="M24 2L28 6H24Z" fill="#e0b04c"/></svg>
<svg class="mt-[3px] w-[30px] h-[30px] shrink-0" viewBox="0 0 30 30"><circle cx="14" cy="14" r="13" fill="#1f2d4c"/><circle cx="14" cy="14" r="8" fill="#4a9ae8"/><path d="M20 20L28 28" stroke="#1f2d4c" stroke-width="4"/></svg>
<svg class="mt-[5px] w-[30px] h-[30px] shrink-0" viewBox="0 0 30 30"><path d="M4 7H26L24 30H6Z" fill="#c8c8c8"/><ellipse cx="15" cy="7" rx="11" ry="4" fill="#ececec" stroke="#888"/></svg>
</div>

<!-- dock running indicators -->
<i class="absolute left-[1276px] top-[18px] w-[2px] h-[9px] bg-[#e8f0f8]"></i>
<i class="absolute left-[1276px] top-[632px] w-[2px] h-[10px] bg-[#e8f0f8]"></i>
<i class="absolute left-[1276px] top-[664px] w-[2px] h-[10px] bg-[#e8f0f8]"></i>

<!-- Select layer popup -->
<div class="absolute left-[467px] top-[271px] w-[110px] h-[334px] bg-[#ececec] rounded-[4px] overflow-hidden">
<div class="flex items-center h-[19px] bg-gradient-to-b from-[#ececec] to-[#c4c4c4] text-[11px] text-[#444]">
<i class="ml-[7px] w-[10px] h-[10px] rounded-full bg-[#e0534f] border border-[#b04040]"></i>
<i class="ml-[8px] w-[10px] h-[10px] rounded-full bg-[#d0d0d0] border border-[#aaa]"></i>
<i class="ml-[8px] w-[10px] h-[10px] rounded-full bg-[#d0d0d0] border border-[#aaa]"></i>
<span class="ml-[8px]">Selec...</span>
</div>
<div class="flex flex-col w-[101px] ml-[4px] mt-[6px] text-[11px] text-[#333]">
<div class="flex items-center h-[16.9px] border-b border-[#d4d4d4]"><i class="ml-[16px] w-[17px] h-[17px] bg-[#0f2090]"></i><span class="ml-[2px]">B.Adhes</span></div>
<div class="flex items-center h-[16.9px] border-b border-[#d4d4d4]"><i class="ml-[16px] w-[17px] h-[17px] bg-[#8e2e9a]"></i><span class="ml-[2px]">F.Adhes</span></div>
<div class="flex items-center h-[16.9px] border-b border-[#d4d4d4]"><i class="ml-[16px] w-[17px] h-[17px] bg-[#48c0c8]"></i><span class="ml-[2px]">B.Paste</span></div>
<div class="flex items-center h-[16.9px] border-b border-[#d4d4d4]"><i class="ml-[16px] w-[17px] h-[17px] bg-[#a01c1c]"></i><span class="ml-[2px]">F.Paste</span></div>
<div class="flex items-center h-[16.9px] border-b border-[#d4d4d4]"><i class="ml-[16px] w-[17px] h-[17px] bg-[#8e2e9a]"></i><span class="ml-[2px]">B.SilkS</span></div>
<div class="flex items-center h-[16.9px] border-b border-[#d4d4d4]"><i class="ml-[16px] w-[17px] h-[17px] bg-[#308c90]"></i><span class="ml-[2px]">F.SilkS</span></div>
<div class="flex items-center h-[16.9px] border-b border-[#d4d4d4]"><i class="ml-[16px] w-[17px] h-[17px] bg-[#8f8a18]"></i><span class="ml-[2px]">B.Mask</span></div>
<div class="flex items-center h-[16.9px] border-b border-[#d4d4d4]"><i class="ml-[16px] w-[17px] h-[17px] bg-[#8e2e9a]"></i><span class="ml-[2px]">F.Mask</span></div>
<div class="flex items-center h-[16.9px] bg-[#c8c8c8]"><span class="w-[34px] pl-[2px]">X</span><span class="flex-1 h-[17px] leading-[13px] pl-[1px] bg-white border-2 border-black">Dwgs.User</span></div>
<div class="flex items-center h-[16.9px] border-b border-[#d4d4d4]"><i class="ml-[16px] w-[17px] h-[17px] bg-[#0f2090]"></i><span class="ml-[2px]">Cmts.User</span></div>
<div class="flex items-center h-[16.9px] border-b border-[#d4d4d4]"><i class="ml-[16px] w-[17px] h-[17px] bg-[#3f8a10]"></i><span class="ml-[2px]">Eco1.User</span></div>
<div class="flex items-center h-[16.9px] border-b border-[#d4d4d4]"><i class="ml-[16px] w-[17px] h-[17px] bg-[#c4bc10]"></i><span class="ml-[2px]">Eco2.User</span></div>
<div class="flex items-center h-[16.9px] border-b border-[#d4d4d4]"><i class="ml-[16px] w-[17px] h-[17px] bg-[#c4bc10]"></i><span class="ml-[2px]">Edge.Cuts</span></div>
<div class="flex items-center h-[16.9px] border-b border-[#d4d4d4]"><i class="ml-[16px] w-[17px] h-[17px] bg-[#d040c8]"></i><span class="ml-[2px]">Margin</span></div>
<div class="flex items-center h-[16.9px] border-b border-[#d4d4d4]"><i class="ml-[16px] w-[17px] h-[17px] bg-[#c4bc10]"></i><span class="ml-[2px]">B.CrtYd</span></div>
<div class="flex items-center h-[16.9px] border-b border-[#d4d4d4]"><i class="ml-[16px] w-[17px] h-[17px] bg-[#888888]"></i><span class="ml-[2px]">F.CrtYd</span></div>
<div class="flex items-center h-[16.9px] border-b border-[#d4d4d4]"><i class="ml-[16px] w-[17px] h-[17px] bg-[#a01c1c]"></i><span class="ml-[2px]">B.Fab</span></div>
<div class="flex items-center h-[16.9px] border-b border-[#d4d4d4]"><i class="ml-[16px] w-[17px] h-[17px] bg-[#c4bc10]"></i><span class="ml-[2px]">F.Fab</span></div>
</div>
</div>

<!-- mouse pointer -->
<svg class="absolute left-[492px] top-[485px] w-[12px] h-[17px]" viewBox="0 0 12 17"><path d="M1.500 1V13L4.500 10.500L6.500 15.500L8.500 14.500L6.500 10H10Z" fill="#111" stroke="#eee" stroke-width=".8"/></svg>
</div>
</body></html>
